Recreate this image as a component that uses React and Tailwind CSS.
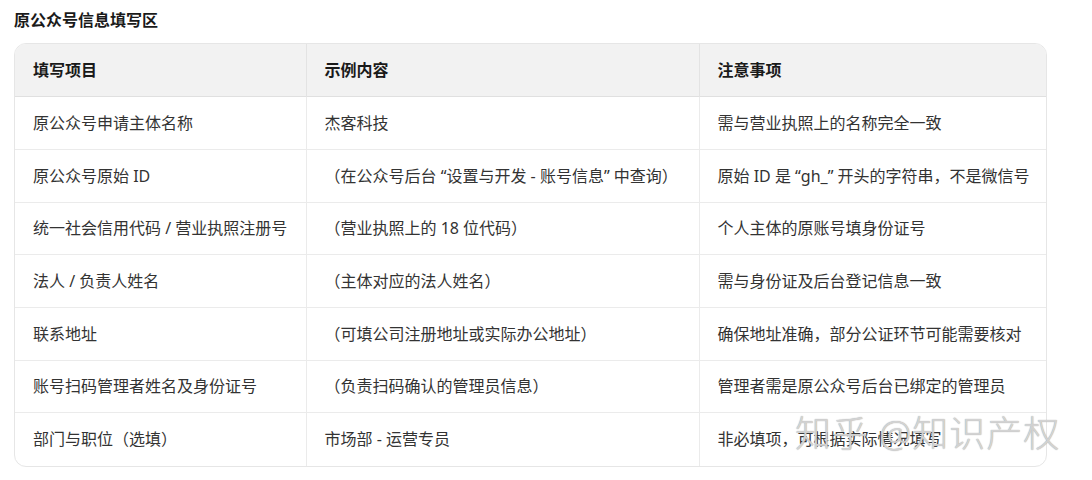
const rows = [
  ['原公众号申请主体名称', '杰客科技', '需与营业执照上的名称完全一致'],
  ['原公众号原始 ID', '（在公众号后台 “设置与开发 - 账号信息” 中查询）', '原始 ID 是 “gh_” 开头的字符串，不是微信号'],
  ['统一社会信用代码 / 营业执照注册号', '（营业执照上的 18 位代码）', '个人主体的原账号填身份证号'],
  ['法人 / 负责人姓名', '（主体对应的法人姓名）', '需与身份证及后台登记信息一致'],
  ['联系地址', '（可填公司注册地址或实际办公地址）', '确保地址准确，部分公证环节可能需要核对'],
  ['账号扫码管理者姓名及身份证号', '（负责扫码确认的管理员信息）', '管理者需是原公众号后台已绑定的管理员'],
  ['部门与职位（选填）', '市场部 - 运营专员', '非必填项，可根据实际情况填写'],
];

export default function App() {
  return (
    <div className="relative w-[1092px] h-[480px] bg-white font-['Noto_Sans','Noto_Sans_CJK_SC',sans-serif] overflow-hidden">
      <div className="pl-[14px] pt-[9px]">
        <h2 className="text-[16px] font-bold text-[#1a1a1a] leading-[22px]">原公众号信息填写区</h2>
        <div className="mt-[12px] w-[1033px] rounded-[12px] border border-[#e6e6e6] overflow-hidden">
          <table className="w-full text-[16px] border-collapse">
            <thead>
              <tr className="bg-[#f2f2f2] text-left text-[#1a1a1a] border-b border-[#e0e0e0]">
                <th className="h-[52.7px] pl-[18px] font-bold w-[291px]">填写项目</th>
                <th className="h-[52.7px] pl-[18px] font-bold w-[393px] border-l border-[#e3e3e3]">示例内容</th>
                <th className="h-[52.7px] pl-[18px] font-bold border-l border-[#e3e3e3]">注意事项</th>
              </tr>
            </thead>
            <tbody>
              {rows.map((r, i) => (
                <tr key={i} className={i < rows.length - 1 ? 'border-b border-[#ebebeb]' : ''}>
                  <td className="h-[52.7px] pl-[18px] text-[#333] whitespace-nowrap">{r[0]}</td>
                  <td className="h-[52.7px] pl-[18px] text-[#333] whitespace-nowrap border-l border-[#ebebeb]">{r[1]}</td>
                  <td className="h-[52.7px] pl-[18px] text-[#333] whitespace-nowrap border-l border-[#ebebeb]">{r[2]}</td>
                </tr>
              ))}
            </tbody>
          </table>
        </div>
      </div>
      <div className="absolute left-[795px] top-[412px] text-[36px] leading-[44px] font-light text-[#e4e4e4]/80 [text-shadow:0_0_1px_#8a8a8a] tracking-[1px]">
        知乎 @知识产权
      </div>
    </div>
  );
}
